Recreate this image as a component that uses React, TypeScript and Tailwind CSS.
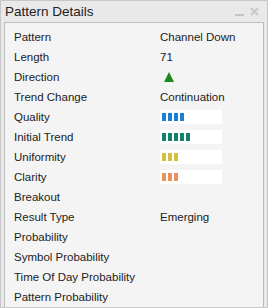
const ROWS: { label: string; value?: string; kind?: "text" | "up" | "bar"; bars?: number; color?: string }[] = [
  { label: "Pattern", value: "Channel Down" },
  { label: "Length", value: "71" },
  { label: "Direction", kind: "up" },
  { label: "Trend Change", value: "Continuation" },
  { label: "Quality", kind: "bar", bars: 4, color: "bg-[#1b7fd8]" },
  { label: "Initial Trend", kind: "bar", bars: 5, color: "bg-[#168072]" },
  { label: "Uniformity", kind: "bar", bars: 3, color: "bg-[#d2c043]" },
  { label: "Clarity", kind: "bar", bars: 3, color: "bg-[#e8925c]" },
  { label: "Breakout" },
  { label: "Result Type", value: "Emerging" },
  { label: "Probability" },
  { label: "Symbol Probability" },
  { label: "Time Of Day Probability" },
  { label: "Pattern Probability" },
];

export default function App() {
  return (
    <div
      className="w-[268px] h-[308px] bg-[#e9e9e9] border border-[#c8c8c8] flex flex-col overflow-hidden"
      style={{ fontFamily: "'Liberation Sans', Arial, sans-serif" }}
    >
      <div className="h-[22px] flex items-center justify-between pl-[4px] pr-[8px]">
        <span className="text-[13.5px] text-[#222] pt-[1px]">Pattern Details</span>
        <div className="flex items-center gap-[6px]">
          <span className="w-[9px] h-[2px] bg-[#c4c4c4] mt-[6px]" />
          <svg width="9" height="9" viewBox="0 0 9 9">
            <path d="M1 1L8 8M8 1L1 8" stroke="#c8c8c8" strokeWidth="2" />
          </svg>
        </div>
      </div>
      <div className="flex-1 mx-[3px] mb-[1px] bg-[#f4f4f4] border border-[#bdbdbd] pt-[4px] pl-[9px]">
        {ROWS.map((r) => (
          <div key={r.label} className="h-[20px] flex items-center text-[11.5px] text-[#222]">
            <span className="w-[146px]">{r.label}</span>
            {r.value && <span>{r.value}</span>}
            {r.kind === "up" && (
              <svg width="10" height="10" viewBox="0 0 10 10" className="ml-[4px]">
                <polygon points="5,0 10,10 0,10" fill="#1a8a1a" />
              </svg>
            )}
            {r.kind === "bar" && (
              <div className="w-[62px] h-[14px] bg-white flex items-center gap-[2px] pl-[2px]">
                {Array.from({ length: r.bars ?? 0 }).map((_, i) => (
                  <span key={i} className={`w-[4px] h-[8px] ${r.color}`} />
                ))}
              </div>
            )}
          </div>
        ))}
      </div>
    </div>
  );
}
